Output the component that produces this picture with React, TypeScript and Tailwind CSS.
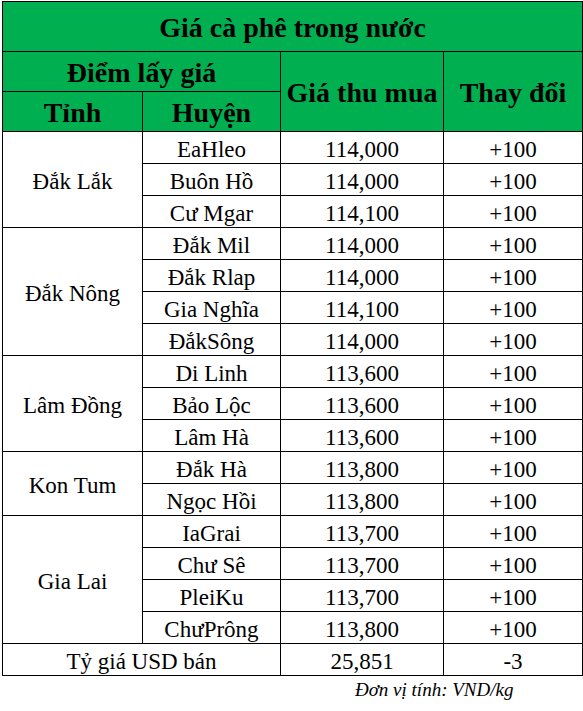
const rows: { tinh?: string; span?: number; huyen: string; gia: string; doi: string }[] = [
  { tinh: "Đắk Lắk", span: 3, huyen: "EaHleo", gia: "114,000", doi: "+100" },
  { huyen: "Buôn Hồ", gia: "114,000", doi: "+100" },
  { huyen: "Cư Mgar", gia: "114,100", doi: "+100" },
  { tinh: "Đắk Nông", span: 4, huyen: "Đắk Mil", gia: "114,000", doi: "+100" },
  { huyen: "Đắk Rlap", gia: "114,000", doi: "+100" },
  { huyen: "Gia Nghĩa", gia: "114,100", doi: "+100" },
  { huyen: "ĐắkSông", gia: "114,000", doi: "+100" },
  { tinh: "Lâm Đồng", span: 3, huyen: "Di Linh", gia: "113,600", doi: "+100" },
  { huyen: "Bảo Lộc", gia: "113,600", doi: "+100" },
  { huyen: "Lâm Hà", gia: "113,600", doi: "+100" },
  { tinh: "Kon Tum", span: 2, huyen: "Đắk Hà", gia: "113,800", doi: "+100" },
  { huyen: "Ngọc Hồi", gia: "113,800", doi: "+100" },
  { tinh: "Gia Lai", span: 4, huyen: "IaGrai", gia: "113,700", doi: "+100" },
  { huyen: "Chư Sê", gia: "113,700", doi: "+100" },
  { huyen: "PleiKu", gia: "113,700", doi: "+100" },
  { huyen: "ChưPrông", gia: "113,800", doi: "+100" },
];

// header cells sit ~1px low, body cells ~1.5px low, like the Excel export
const th = "border border-black px-0 pb-0 pt-[2px] text-center align-middle";
const td = "border border-black px-0 pb-0 pt-[3px] text-center align-middle";

export default function App() {
  return (
    <div className="min-h-screen bg-white pt-px pl-[2px] [font-family:Liberation_Serif,serif] leading-tight text-black">
      <table className="table-fixed border-collapse w-[580px]">
        <colgroup>
          <col className="w-[140px]" />
          <col className="w-[138px]" />
          <col className="w-[163px]" />
          <col className="w-[139px]" />
        </colgroup>
        <thead className="bg-[#00b050] font-bold text-[28px] leading-none">
          <tr className="h-[50px]">
            <th colSpan={4} className={th}>Giá cà phê trong nước</th>
          </tr>
          <tr className="h-[40px]">
            <th colSpan={2} className={th}>Điểm lấy giá</th>
            <th rowSpan={2} className={th}>Giá thu mua</th>
            <th rowSpan={2} className={th}>Thay đổi</th>
          </tr>
          <tr className="h-[40px]">
            <th className={th}>Tỉnh</th>
            <th className={th}>Huyện</th>
          </tr>
        </thead>
        <tbody className="text-[23px] leading-none">
          {rows.map((r, i) => (
            <tr key={i} className="h-[32px]">
              {r.tinh && (
                <td rowSpan={r.span} className={td}>{r.tinh}</td>
              )}
              <td className={td}>{r.huyen}</td>
              <td className={td}>{r.gia}</td>
              <td className={td}>{r.doi}</td>
            </tr>
          ))}
          <tr className="h-[32px]">
            <td colSpan={2} className={td}>Tỷ giá USD bán</td>
            <td className={td}>25,851</td>
            <td className={td}>-3</td>
          </tr>
        </tbody>
      </table>
      <div className="pl-[353px] pt-[2px] italic text-[19px]">Đơn vị tính: VND/kg</div>
    </div>
  );
}
